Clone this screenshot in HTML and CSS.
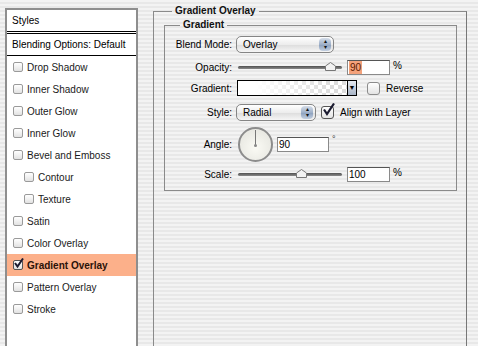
FILE: index.html
```html
<!DOCTYPE html>
<html lang="en">
<head>
    <meta charset="UTF-8">
    <title>Layer Style</title>
    <link rel="stylesheet" href="styles.css">
</head>
<body>

    <div class="styles-list">
        <div class="list-head">Styles</div>
        <div class="list-blend">Blending Options: Default</div>
        <div class="item"><span class="cb"></span>Drop Shadow</div>
        <div class="item"><span class="cb"></span>Inner Shadow</div>
        <div class="item"><span class="cb"></span>Outer Glow</div>
        <div class="item"><span class="cb"></span>Inner Glow</div>
        <div class="item"><span class="cb"></span>Bevel and Emboss</div>
        <div class="item sub"><span class="cb"></span>Contour</div>
        <div class="item sub"><span class="cb"></span>Texture</div>
        <div class="item"><span class="cb"></span>Satin</div>
        <div class="item"><span class="cb"></span>Color Overlay</div>
        <div class="item active">
            <span class="cb on">
                <svg width="11" height="11" viewBox="0 0 11 11"><path d="M2 5 L4.5 8.5 L10 0.5" fill="none" stroke="#1b1b30" stroke-width="2"/></svg>
            </span>Gradient Overlay
        </div>
        <div class="item"><span class="cb"></span>Pattern Overlay</div>
        <div class="item"><span class="cb"></span>Stroke</div>
    </div>

    <fieldset class="group">
        <legend>Gradient Overlay</legend>

        <fieldset class="inner">
            <legend>Gradient</legend>

            <div class="row r-blend">
                <label>Blend Mode:</label>
                <div class="popup blend">
                    <span class="popup-text">Overlay</span>
                    <span class="stepper">&#9652;<br>&#9662;</span>
                </div>
            </div>

            <div class="row r-opacity">
                <label>Opacity:</label>
                <div class="slider">
                    <div class="track"></div>
                    <svg class="thumb" style="left: 87px" width="11" height="9" viewBox="0 0 11 9"><path d="M0.5 8.5 V4 L5.5 0.5 L10.5 4 V8.5 Z" fill="#f2f2f2" stroke="#777"/></svg>
                </div>
                <div class="field"><span class="sel">90</span></div>
                <span class="unit">%</span>
            </div>

            <div class="row r-gradient">
                <label>Gradient:</label>
                <div class="swatch"></div>
                <div class="drop">&#9660;</div>
                <span class="check"></span>
                <span class="check-label">Reverse</span>
            </div>

            <div class="row r-style">
                <label>Style:</label>
                <div class="popup style">
                    <span class="popup-text">Radial</span>
                    <span class="stepper">&#9652;<br>&#9662;</span>
                </div>
                <span class="check on">
                    <svg width="14" height="14" viewBox="0 0 14 14"><path d="M3 6.5 L6 11 L13 0.5" fill="none" stroke="#1b1b30" stroke-width="2.2"/></svg>
                </span>
                <span class="check-label">Align with Layer</span>
            </div>

            <div class="row r-angle">
                <label>Angle:</label>
                <div class="dial"><span class="hand"></span><span class="dot"></span></div>
                <div class="field angle">90</div>
                <span class="deg">&deg;</span>
            </div>

            <div class="row r-scale">
                <label>Scale:</label>
                <div class="slider">
                    <div class="track"></div>
                    <svg class="thumb" style="left: 58px" width="11" height="9" viewBox="0 0 11 9"><path d="M0.5 8.5 V4 L5.5 0.5 L10.5 4 V8.5 Z" fill="#f2f2f2" stroke="#777"/></svg>
                </div>
                <div class="field">100</div>
                <span class="unit">%</span>
            </div>
        </fieldset>
    </fieldset>

</body>
</html>
```

FILE: styles.css
```css
body {
    margin: 0;
    height: 346px;
    overflow: hidden;
    display: flex;
    align-items: flex-start;
    font-family: "Liberation Sans", Arial, sans-serif;
    font-size: 10px;
    color: #000;
    background: repeating-linear-gradient(#f3f3f3 0 2px, #e8e8e8 2px 4px);
}

/* left list */
.styles-list {
    margin: 8px 0 0 5px;
    width: 129px;
    height: 336px;
    background: #fff;
    border: 2px solid #8e8e8e;
    border-bottom: 0;
}
.list-head {
    height: 21px;
    line-height: 21px;
    padding-left: 5px;
    border-bottom: 3px double #000;
}
.list-blend {
    height: 21px;
    line-height: 21px;
    padding-left: 5px;
    border-bottom: 1px solid #000;
}
.item {
    height: 22px;
    display: flex;
    align-items: center;
    padding-left: 6px;
    color: #1a1a1a;
}
.item.sub {
    padding-left: 17px;
}
.item.active {
    background: #fcb08a;
    font-weight: bold;
    color: #2a1208;
}
.cb {
    position: relative;
    width: 8px;
    height: 8px;
    margin-right: 4px;
    border: 1px solid #9a9a9a;
    border-radius: 2px;
    background: linear-gradient(#fff, #e2e2e2);
}
.cb svg {
    position: absolute;
    left: -1px;
    top: -3px;
}
.cb.on {
    border-color: #555;
}

/* right group */
fieldset {
    margin: 0;
    padding: 0;
    min-width: 0;
}
legend {
    padding: 0 3px;
    font-weight: bold;
    line-height: 12px;
    color: #111;
}
.group {
    margin: 5px 0 0 15px;
    width: 312px;
    height: 341px;
    border: 1px solid #8a8a8a;
    border-right-color: #777;
    border-bottom: 0;
}
.group > legend {
    margin-left: 18px;
}
.inner {
    margin: 2px 9px 0 10px;
    padding: 2px 0 3px;
    border: 1px solid #8a8a8a;
}
.inner > legend {
    margin-left: 15px;
}

.row {
    display: flex;
    align-items: center;
    height: 22px;
}
.row > label {
    width: 67px;
    margin-right: 4px;
    text-align: right;
}
.r-opacity { height: 24px; }
.r-gradient { height: 18px; }
.r-style { height: 30px; }
.r-angle { height: 34px; }
.r-scale { height: 26px; }

/* popup buttons */
.popup {
    display: flex;
    align-items: center;
    height: 15px;
    border: 1px solid #858585;
    border-radius: 5px;
    background: linear-gradient(#fff, #ededed 50%, #dedede 55%, #f6f6f6);
    overflow: hidden;
}
.popup.blend { width: 96px; }
.popup.style { width: 78px; }
.popup-text {
    flex: 1;
    padding-left: 6px;
}
.stepper {
    width: 12px;
    margin-right: 2px;
    height: 13px;
    border-radius: 4px;
    font-size: 6px;
    line-height: 6px;
    text-align: center;
    color: #111;
    background: linear-gradient(#d5dde9, #9fb0c8 50%, #8ea2bf 55%, #c3cfe0);
}

/* sliders */
.slider {
    position: relative;
    width: 104px;
    height: 12px;
    margin-left: 2px;
}
.track {
    margin-top: 5px;
    height: 3px;
    border-radius: 2px;
    background: linear-gradient(#4f4f4f, #8a8a8a);
}
.thumb {
    position: absolute;
    top: 1px;
}

.field {
    width: 40px;
    height: 13px;
    margin-left: 5px;
    padding-left: 1px;
    line-height: 13px;
    background: #fff;
    border: 1px solid #8a8a8a;
    border-top-color: #555;
}
.sel {
    display: inline-block;
    padding: 0 1px;
    background: #f4a27b;
    color: #5a1a00;
}
.unit {
    margin-left: 3px;
    margin-top: -4px;
}

/* gradient swatch */
.swatch {
    width: 109px;
    height: 14px;
    margin-left: 1px;
    border: 1px solid #000;
    background:
        linear-gradient(to right, #fff 15%, rgba(255, 255, 255, 0) 85%),
        repeating-conic-gradient(#fff 0 25%, #dcdcdc 0 50%) 0 0 / 8px 8px;
}
.drop {
    width: 8px;
    height: 14px;
    border: 1px solid #000;
    border-left: 0;
    font-size: 7px;
    line-height: 14px;
    text-align: center;
    background: linear-gradient(#e4e8ef, #a8b4c6);
}

/* checkboxes */
.check {
    position: relative;
    width: 11px;
    height: 11px;
    margin-left: 10px;
    border: 1px solid #8c8c8c;
    border-radius: 3px;
    background: linear-gradient(#fff, #e4e4e4);
}
.check.on {
    margin-left: 5px;
    border-color: #555;
}
.check svg {
    position: absolute;
    left: -1px;
    top: -4px;
}
.check-label {
    margin-left: 6px;
}

/* angle dial */
.dial {
    position: relative;
    width: 31px;
    height: 31px;
    margin-left: 2px;
    border: 2px solid #8c8c8c;
    border-radius: 50%;
    background: radial-gradient(circle at 50% 60%, #fafaf4, #e2e2dc);
}
.hand {
    position: absolute;
    left: 15px;
    top: 1px;
    width: 1px;
    height: 15px;
    background: #777;
}
.dot {
    position: absolute;
    left: 14px;
    top: 15px;
    width: 3px;
    height: 3px;
    border-radius: 50%;
    background: #888;
}
.field.angle {
    width: 49px;
    margin-left: 4px;
}
.deg {
    margin-left: 3px;
    margin-top: -10px;
    font-size: 9px;
    color: #333;
}
```
